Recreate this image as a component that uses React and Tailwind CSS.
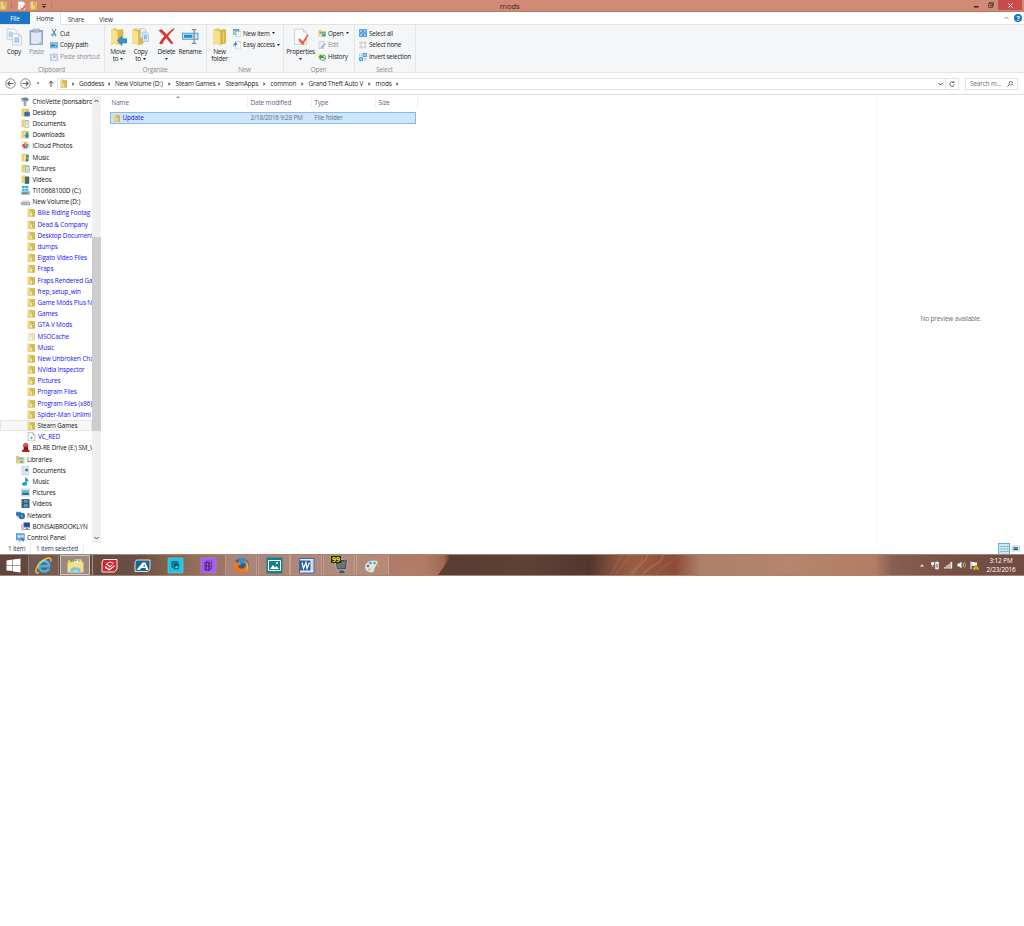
import React from 'react';
import clsx from 'clsx';

const breadcrumbs = [
  { name: 'Goddess', width: 'w-[36px]' },
  { name: 'New Volume (D:)', width: 'w-[60.5px]' },
  { name: 'Steam Games', width: 'w-[50px]' },
  { name: 'SteamApps', width: 'w-[45px]' },
  { name: 'common', width: 'w-[38px]' },
  { name: 'Grand Theft Auto V', width: 'w-[67px]' },
  { name: 'mods', width: 'w-[28px]' },
];

const places = [
  { name: 'ChioVette (bonsaibro', icon: 'phone' },
  { name: 'Desktop', icon: 'desktop' },
  { name: 'Documents', icon: 'folderDoc' },
  { name: 'Downloads', icon: 'folderDown' },
  { name: 'iCloud Photos', icon: 'icloud' },
  { name: 'Music', icon: 'folderMusic' },
  { name: 'Pictures', icon: 'folderPic' },
  { name: 'Videos', icon: 'folderVideo' },
  { name: 'TI10668100D (C:)', icon: 'system' },
  { name: 'New Volume (D:)', icon: 'drive' },
];

const folders = [
  'Bike Riding Footag',
  'Dead & Company',
  'Desktop Document',
  'dumps',
  'Elgato Video Files',
  'Fraps',
  'Fraps Rendered Gar',
  'frep_setup_win',
  'Game Mods Plus N',
  'Games',
  'GTA V Mods',
  'MSOCache',
  'Music',
  'New Unbroken Cha',
  'NVidia Inspector',
  'Pictures',
  'Program Files',
  'Program Files (x86)',
  'Spider-Man Unlimi',
];

const libraries = [
  { name: 'Documents', icon: 'doc' },
  { name: 'Music', icon: 'note' },
  { name: 'Pictures', icon: 'picture' },
  { name: 'Videos', icon: 'film' },
];

const Folder = ({ className = 'w-[8px] h-[9px]' }) => (
  <svg className={clsx('shrink-0', className)} viewBox="0 0 16 18" preserveAspectRatio="none">
    <path d="M1 1h7v16H1z" fill="#ecd683" />
    <path d="M8 2h8v15H8z" fill="#dfc15c" />
    <path d="M8 9l3-1v9H8z" fill="#f7e9a6" />
    <path d="M8 2v7M11.500 5v11" fill="none" stroke="#b3922f" />
    <path d="M15.500 3v14M1 16.500h14" stroke="#c9a846" />
  </svg>
);

const badges = {
  desktop: <path d="M7 8h9v7H7z" fill="#2476c5" stroke="#174c8b" />,
  folderDoc: <path d="M8 4h7v12H8zM10 8h4M10 11h4" fill="#eef5fa" stroke="#90a9bc" />,
  folderDown: <path d="M9 5h4v5h3l-5 6-5-6h3z" fill="#2586cf" />,
  folderMusic: <path d="M11 4v9M11 4l4 3M9 14a2 1.5 0 1 0 1-2" fill="#1e80c2" stroke="#1e80c2" strokeWidth="2" />,
  folderPic: <path d="M8 5h8v10H8zM9 12l3-3 3 3" fill="#d2edf6" stroke="#6999ad" />,
  folderVideo: <path d="M8 4h7v12H8zM8 8h7M8 12h7" fill="#47758b" stroke="#31444e" />,
};

const TreeIcon = ({ name }) => {
  if (badges[name]) {
    return (
      <svg className="w-[9px] h-[9px] shrink-0" viewBox="0 0 17 17">
        <path d="M1 2l6-2v15l-6 1z" fill="#ecd06c" />
        <path d="M6 2h9v14H6z" fill="#dfc15a" />
        <path d="M6 3l3 2v10l-3 2z" fill="#f7e9a6" />
        {badges[name]}
      </svg>
    );
  }
  const art = {
    phone: (
      <>
        <path d="M1 2l10-1 4 4-5 3H2z" fill="#73777b" />
        <path d="M5 6h5v11H5z" fill="#a0a6ab" />
        <circle cx="11" cy="5" r="3" fill="#4b9ac9" />
        <path d="M1 4h4v4H1z" fill="#9ab1be" />
      </>
    ),
    icloud: (
      <>
        <rect x="1" y="1" width="15" height="15" rx="3" fill="#f2f2f2" stroke="#d5d5d5" />
        <circle cx="8.500" cy="5.500" r="3" fill="#f39320" />
        <circle cx="12" cy="8" r="2.500" fill="#5bb947" />
        <circle cx="10.500" cy="11.500" r="2.500" fill="#3a9cdd" />
        <circle cx="6.500" cy="11.500" r="2.500" fill="#9a45b0" />
        <circle cx="5" cy="8" r="2.500" fill="#e63b31" />
      </>
    ),
    system: (
      <>
        <path d="M2 0h5v4H2zM8 0h6v4H8zM2 5h5v4H2zM8 5h6v4H8z" fill="#25b0df" />
        <path d="M1 10h15v6H1z" fill="#628394" />
        <path d="M2 10h13v2H2z" fill="#c0d2d9" />
        <path d="M12 13h2v2h-2z" fill="#6bf06b" />
      </>
    ),
    drive: (
      <>
        <path d="M3 6h12l2 5H1z" fill="#e2e5e7" />
        <path d="M1 10h16v5H1z" fill="#b2b7ba" stroke="#858b8e" />
        <path d="M12 12h3v1h-3z" fill="#fff" />
      </>
    ),
    file: (
      <>
        <path d="M2 1h9l4 4v12H2z" fill="#f6f8f8" stroke="#93999c" />
        <path d="M11 1v4h4" fill="none" stroke="#93999c" />
        <path d="M6 11l2-3 3 3-2 3z" fill="#72b77b" />
      </>
    ),
    disc: (
      <>
        <circle cx="9" cy="5" r="5" fill="#d0332b" />
        <path d="M5 2h8v3H5z" fill="#e96355" />
        <path d="M6 8h7l1 5H4z" fill="#7e1d1a" />
        <path d="M2 13h14v4H2z" fill="#b5241e" />
      </>
    ),
    libraries: (
      <>
        <path d="M0 2h6l1 2h9v12H0z" fill="#e8ca68" />
        <path d="M3 5h11v8H3z" fill="#79c2df" />
        <path d="M2 9h14v7H4z" fill="#f4df8f" />
        <path d="M7 11h7v4H7z" fill="#68add2" />
      </>
    ),
    doc: (
      <>
        <path d="M2 1h12v15H2z" fill="#f0f5f8" stroke="#99a8b3" />
        <path d="M4 4h3M4 7h3M4 10h3M4 13h7" stroke="#b1bdc5" />
        <path d="M8 5h5v5H8z" fill="#3574a8" />
      </>
    ),
    note: (
      <>
        <path d="M9 0c1 4 7 4 5 10-1-3-3-3-3-3v7H8V0z" fill="#2390d6" />
        <ellipse cx="6.500" cy="13" rx="4.500" ry="3.500" fill="#2797de" />
      </>
    ),
    picture: (
      <>
        <path d="M0 2h17v13H0z" fill="#eef3f3" stroke="#a6b2b7" />
        <path d="M2 4h13v9H2z" fill="#61b3da" />
        <path d="M2 9l5 1 4-1 4 1v3H2z" fill="#28737c" />
      </>
    ),
    film: (
      <>
        <path d="M1 0h15v17H1z" fill="#344650" />
        <path d="M5 1h8v6H5zM5 9h8v7H5z" fill="#4d9cbd" />
        <path d="M3 1v15M15 1v15" stroke="#d6dee1" strokeDasharray="1.500 2" />
      </>
    ),
    network: (
      <>
        <path d="M0 2h9v7H0z" fill="#2671bc" stroke="#879ba9" />
        <circle cx="11" cy="9.500" r="6" fill="#1f67ba" />
        <path d="M9 5c4 0 3 3 5 4-1 2-1 4-2 5-2-3-4-4-3-9" fill="#41b25a" />
        <path d="M2 10h5v2H2z" fill="#8499a8" />
      </>
    ),
    computer: (
      <>
        <path d="M5 1h12v9H5z" fill="#2446ad" stroke="#96a4b3" />
        <path d="M1 5h4v10H1z" fill="#d0d5dc" stroke="#9aa0ab" />
        <path d="M9 11h5v2h3v2H6v-2h3z" fill="#84919e" />
      </>
    ),
    control: (
      <>
        <path d="M0 1h16v12H0z" fill="#5aa8da" stroke="#6d91a9" />
        <path d="M3 4h5v5H3z" fill="#d7edf8" />
        <circle cx="12" cy="6" r="3" fill="#b9def2" />
        <path d="M9 11l3-2 4 5-3 2z" fill="#3679ac" />
        <path d="M4 14h6v2H4z" fill="#8ca9bb" />
      </>
    ),
  };
  return (
    <svg className="w-[9px] h-[9px] shrink-0" viewBox="0 0 17 17">
      {art[name]}
    </svg>
  );
};

const TreeRow = ({ name, icon, indent = 'pl-[21px]', blue, selected, faded }) => (
  <div
    className={clsx(
      'flex items-center h-[11.19px] gap-[2.500px] whitespace-nowrap',
      indent,
      blue ? 'text-[#1410fa]' : 'text-[#111]',
      selected && 'bg-[#f7f7f7] outline outline-[0.5px] -outline-offset-1 outline-[#e6e6e6]'
    )}
  >
    {icon ? <TreeIcon name={icon} /> : <Folder className={clsx('w-[8px] h-[9px]', faded && 'opacity-45')} />}
    <span>{name}</span>
  </div>
);

const Caret = ({ className }) => (
  <svg className={clsx('w-[3px] h-[2px] shrink-0', className)} viewBox="0 0 6 4">
    <path d="M0 0h6L3 4z" fill="#222" />
  </svg>
);

const ribbonArt = {
  copy: (
    <>
      <path d="M2 2h14l4 4v16H2z" fill="#f7fafc" stroke="#9dacb8" />
      <path d="M5 7h8v11H5z" fill="#b9d4ec" />
      <path d="M13 11h12l5 5v17H13z" fill="#f9fbfc" stroke="#9dacb8" />
      <path d="M25 11v5h5" fill="none" stroke="#9dacb8" />
      <path d="M16 18h10v11H16z" fill="#a8cdf0" />
    </>
  ),
  paste: (
    <>
      <path d="M3 4h26v29H3z" fill="#8ba3c7" />
      <path d="M6 8h20v23H6z" fill="#dfe8f4" />
      <path d="M10 2h12v6H10z" fill="#b7c2d1" stroke="#8594a9" />
      <path d="M19 31l7-7v7z" fill="#bac9df" />
    </>
  ),
  folder: (
    <>
      <path d="M4 3l12-3v30L4 32z" fill="#e5c659" />
      <path d="M14 4l15-2v28l-15 3z" fill="#d8b547" />
      <path d="M4 3l15 5v26L4 30z" fill="#f6e28b" />
      <path d="M19 8v26" stroke="#bc982e" />
      <path d="M24 8v21" stroke="#efd879" strokeWidth="2" />
    </>
  ),
  move: (
    <>
      <path d="M2 2l11-2v30L2 32z" fill="#e5c659" />
      <path d="M12 4l14-2v28l-14 3z" fill="#dcb94c" />
      <path d="M2 2l13 5v26L2 29z" fill="#f6e28b" />
      <path d="M14 24l9-8v5h10v8H23v5z" fill="#2d98d3" stroke="#1a74a8" />
    </>
  ),
  copyTo: (
    <>
      <path d="M0 3l10-3v30L0 31z" fill="#e5c659" />
      <path d="M10 3l12-1v29l-12 3z" fill="#dcb94c" />
      <path d="M0 3l12 5v25L0 29z" fill="#f6e28b" />
      <path d="M16 1h8l3 3v16H16z" fill="#edf4fa" stroke="#8fa4b4" />
      <path d="M20 8h8l4 4v14H20z" fill="#d8eafa" stroke="#8fa4b4" />
      <path d="M23 13h6v9h-6z" fill="#93bfe6" />
    </>
  ),
  remove: (
    <path
      d="M2 5l5-2 10 10C21 8 25 5 31 1l-1 3c-5 4-8 8-11 12l10 13-3 2-10-12c-4 4-6 7-8 12l-5-1c3-6 6-10 10-14z"
      fill="#df3229"
      stroke="#b9271f"
    />
  ),
  rename: (
    <>
      <path d="M1 10h30v12H1z" fill="#cce7f6" stroke="#5a9dc6" strokeWidth="2" />
      <path d="M4 13h16v6H4z" fill="#218bd0" />
      <path d="M19 3h9M23.500 3v27M19 30h9" fill="none" stroke="#7791a2" strokeWidth="2.500" />
    </>
  ),
  properties: (
    <>
      <path d="M5 2h17l6 6v24H5z" fill="#fafbfb" stroke="#a9afb2" />
      <path d="M22 2v6h6" fill="#e5e9eb" stroke="#a9afb2" />
      <path d="M12 23l3-3 6 6L30 12l2 2-10 19-4-2z" fill="#ed653c" />
    </>
  ),
};

const BigButton = ({ art, lines, width, caret, disabled }) => (
  <div className={clsx('flex flex-col items-center shrink-0', width, disabled ? 'text-[#8f8f8f]' : 'text-[#1c1c1c]')}>
    <svg className="w-[17px] h-[18px] shrink-0" viewBox="0 0 33 35">
      {ribbonArt[art]}
    </svg>
    <div className="mt-[2px] leading-[7px] text-center whitespace-nowrap">{lines[0]}</div>
    <div className="flex items-center gap-[2px] h-[7px] leading-[7px]">
      {lines[1]}
      {caret && <Caret />}
    </div>
  </div>
);

const smallArt = {
  cut: (
    <>
      <path d="M4 0l6 11M12 0L6 11" stroke="#477b9f" strokeWidth="2" />
      <path d="M5 10a2 2 0 1 0 1 4zM10 10a2 2 0 1 1 0 4z" fill="none" stroke="#239be1" strokeWidth="2" />
    </>
  ),
  path: (
    <>
      <path d="M0 3h16v11H0z" fill="#8cc6ee" stroke="#3d94cd" />
      <path d="M2 7l2 4 2-4 2 4 2-4M12 10h2" fill="none" stroke="#125f99" strokeWidth="1.500" />
    </>
  ),
  shortcut: (
    <>
      <path d="M1 2h14v13H1z" fill="#d2deec" stroke="#8fa4be" />
      <path d="M4 5h8v8H4z" fill="#f1f5fa" />
      <path d="M5 11l5-5M6 6h4v4" fill="none" stroke="#7899c0" strokeWidth="1.500" />
    </>
  ),
  newItem: (
    <>
      <path d="M1 1h11v10H1z" fill="#9bd1e9" stroke="#4c89aa" />
      <path d="M1 1h11v2H1z" fill="#477f9f" />
      <path d="M6 5h10v11H6z" fill="#f3f7f9" stroke="#92a8b5" />
    </>
  ),
  easy: (
    <>
      <path d="M5 1h11v15H5z" fill="#f9fafb" stroke="#a3acb4" />
      <path d="M2 13c-2-5-1-8 2-9V1l5 5-5 4V7c-2 1-2 3-2 6z" fill="#3082cc" />
    </>
  ),
  open: (
    <>
      <path d="M1 2h5l2 2h8v11H1z" fill="#e6ca61" />
      <path d="M3 6h12v6H3z" fill="#5bb09b" />
      <path d="M1 9h12v6H1z" fill="#f6e28b" />
      <path d="M8 10h7v5H8z" fill="#48a3d2" />
    </>
  ),
  edit: (
    <>
      <path d="M2 1h10v14H2z" fill="#e8f0f8" stroke="#a7b9ca" />
      <path d="M6 12l8-8 2 2-8 8-3 1z" fill="#92b3d5" />
    </>
  ),
  history: (
    <>
      <path d="M1 1h8v12H1z" fill="#efd97e" />
      <circle cx="10" cy="9.500" r="5.500" fill="#e5f2df" stroke="#33913b" strokeWidth="1.500" />
      <path d="M1 8l5-5v3h4v4H6v3z" fill="#37a43e" />
      <path d="M10 6v4h4" fill="none" stroke="#27639b" strokeWidth="1.500" />
    </>
  ),
  all: <path d="M1 1h6v6H1zM9 1h6v6H9zM1 9h6v6H1zM9 9h6v6H9z" fill="#8fcafa" stroke="#2b8ae6" strokeWidth="1.500" />,
  none: <path d="M2 2h4v4H2zM10 2h4v4h-4zM2 10h4v4H2zM10 10h4v4h-4z" fill="#fff" stroke="#aaaeb2" strokeWidth="1.200" />,
  invert: (
    <>
      <path d="M1 2h4v4H1zM10 10h4v4h-4z" fill="#fff" stroke="#8aabc6" />
      <path d="M8 1h7v6H8zM1 9h6v6H1z" fill="#8fcafa" stroke="#2b8ae6" strokeWidth="1.500" />
    </>
  ),
};

const SmallButton = ({ art, label, caret, disabled }) => (
  <div className={clsx('flex items-center h-[11.700px] whitespace-nowrap', disabled ? 'text-[#929292]' : 'text-[#1c1c1c]')}>
    <svg className="w-[8px] h-[8px] mr-[2px] shrink-0" viewBox="0 0 16 16" fill="none">
      {smallArt[art]}
    </svg>
    {label}
    {caret && <Caret className="ml-[2px]" />}
  </div>
);

const RibbonGroup = ({ title, width, children }) => (
  <div className={clsx('flex flex-col h-full shrink-0 border-r border-[#e4e5e6]', width)}>
    <div className="flex h-[39px] shrink-0">{children}</div>
    <div className="h-[8px] pr-px text-center text-[#8c8c8c] leading-[11px]">{title}</div>
  </div>
);

const Ribbon = () => (
  <div className="flex h-[49px] bg-[#f5f6f7] border-t border-b border-[#e2e3e4] tracking-[-0.220px]">
    <RibbonGroup title="Clipboard" width="w-[105px]">
      <div className="flex pt-[3px] pl-[3px]">
        <BigButton art="copy" lines={['Copy']} width="w-[22px]" />
        <BigButton art="paste" lines={['Paste']} width="w-[23px]" disabled />
      </div>
      <div className="pt-[2.300px] pl-[2px]">
        <SmallButton art="cut" label="Cut" />
        <SmallButton art="path" label="Copy path" />
        <SmallButton art="shortcut" label="Paste shortcut" disabled />
      </div>
    </RibbonGroup>
    <RibbonGroup title="Organize" width="w-[102px]">
      <div className="flex pt-[3px] pl-[2px]">
        <BigButton art="move" lines={['Move', 'to']} width="w-[22px]" caret />
        <BigButton art="copyTo" lines={['Copy', 'to']} width="w-[23px]" caret />
        <BigButton art="remove" lines={['Delete']} width="w-[29px]" caret />
        <BigButton art="rename" lines={['Rename']} width="w-[18px]" />
      </div>
    </RibbonGroup>
    <RibbonGroup title="New" width="w-[77px]">
      <div className="flex pt-[3px] pl-[1px]">
        <BigButton art="folder" lines={['New', 'folder']} width="w-[23px]" />
      </div>
      <div className="pt-[2.300px] pl-[2px]">
        <SmallButton art="newItem" label="New item" caret />
        <SmallButton art="easy" label="Easy access" caret />
      </div>
    </RibbonGroup>
    <RibbonGroup title="Open" width="w-[71px]">
      <div className="flex pt-[3px] pl-[2px]">
        <BigButton art="properties" lines={['Properties']} width="w-[29px]" caret />
      </div>
      <div className="pt-[2.300px] pl-[3px]">
        <SmallButton art="open" label="Open" caret />
        <SmallButton art="edit" label="Edit" disabled />
        <SmallButton art="history" label="History" />
      </div>
    </RibbonGroup>
    <RibbonGroup title="Select" width="w-[61px]">
      <div className="pt-[2.300px] pl-[4px]">
        <SmallButton art="all" label="Select all" />
        <SmallButton art="none" label="Select none" />
        <SmallButton art="invert" label="Invert selection" />
      </div>
    </RibbonGroup>
  </div>
);

const TitleBar = () => (
  <div className="relative flex items-center h-[12px] bg-[#d08b76] border-b border-[#bd7965]">
    <Folder className="w-[7px] h-[9px]" />
    <div className="w-px h-[7px] ml-[4px] bg-[#b77562]" />
    <svg className="w-[9px] h-[9px] ml-[5px]" viewBox="0 0 18 18">
      <path d="M2 1h10l4 4v12H2z" fill="#fafafa" stroke="#c7b5af" />
      <path d="M7 12l3 3 6-8v6l-5 5-4-3z" fill="#e8633e" />
    </svg>
    <Folder className="w-[7px] h-[9px] ml-[4px]" />
    <svg className="w-[4px] h-[4px] ml-[4.500px] mt-px" viewBox="0 0 8 8">
      <path d="M0 0h8v1.500H0zM0 4h8L4 8z" fill="#222" />
    </svg>
    <div className="w-px h-[7px] ml-[5px] bg-[#bd7c69]" />
    <div className="flex-1 text-center text-[7.800px] leading-[12px] text-[#382722] pr-[6px]">mods</div>
    <svg className="w-[5px] h-[5px] mt-[2px]" viewBox="0 0 10 10">
      <path d="M0 4h9v3H0z" fill="#302521" />
    </svg>
    <svg className="w-[6px] h-[6px] ml-[9px] mb-px" viewBox="0 0 12 12" fill="none" stroke="#302521" strokeWidth="1.200">
      <path d="M1 3h8v8H1zM3 3V1h8v7H9M4 6h3v2H4z" />
    </svg>
    <div className="flex items-center justify-center w-[24px] h-[10px] ml-[4px] mr-[2px] mb-[1px] bg-[#c84c4e]">
      <svg className="w-[5px] h-[5px]" viewBox="0 0 10 10">
        <path d="M1 1l8 8M9 1L1 9" stroke="#fff" strokeWidth="2" />
      </svg>
    </div>
  </div>
);

const TabBar = () => (
  <div className="flex items-center h-[12px] text-[#333]">
    <div className="w-[30px] h-[12px] bg-[#1a75c8] text-white text-center leading-[14px]">File</div>
    <div className="relative z-10 w-[31px] h-[13px] mt-[1px] bg-[#f8f9fa] border-r border-[#e2e3e4] text-center leading-[14px]">Home</div>
    <div className="w-[30px] h-[12px] text-center leading-[15px]">Share</div>
    <div className="w-[30px] h-[12px] text-center leading-[15px]">View</div>
    <svg className="w-[5px] h-[4px] ml-auto" viewBox="0 0 10 8">
      <path d="M1 6l4-4 4 4" fill="none" stroke="#777" strokeWidth="1.500" />
    </svg>
    <div className="flex items-center justify-center w-[8px] h-[8px] ml-[5px] mr-[2px] rounded-full bg-[#1677cc] text-white text-[7px] font-bold leading-none">
      ?
    </div>
  </div>
);

const NavArrow = ({ flip }) => (
  <svg className={clsx('w-[11px] h-[11px] shrink-0', flip && '-scale-x-100')} viewBox="0 0 22 22" fill="none" stroke="#666">
    <circle cx="11" cy="11" r="9.500" strokeWidth="1.500" />
    <path d="M17 11H6M10 6.500L5.500 11l4.500 4.500" strokeWidth="2.200" />
  </svg>
);

const Crumb = () => (
  <svg className="w-[2.500px] h-[4px] shrink-0 mr-[0.5px]" viewBox="0 0 6 8">
    <path d="M1 0l5 4-5 4z" fill="#444" />
  </svg>
);

const AddressBar = () => (
  <div className="flex items-center h-[22px] border-b-[1.500px] border-[#dcdcdc] text-[#1c1c1c]">
    <div className="flex items-center pl-[5px] w-[57px]">
      <NavArrow />
      <div className="w-[4px]" />
      <NavArrow flip />
      <svg className="w-[4px] h-[3px] ml-[5px]" viewBox="0 0 8 6">
        <path d="M1 1h6L4 5z" fill="#666" />
      </svg>
      <svg className="w-[6px] h-[8px] ml-[7.500px]" viewBox="0 0 12 16">
        <path d="M6 14V3M2 7l4-5 4 5" fill="none" stroke="#555" strokeWidth="2" />
      </svg>
    </div>
    <div className="flex items-center flex-1 h-[12px] border border-[#e1e1e1]">
      <Folder className="w-[7px] h-[9px] ml-[2px] mr-[4.500px]" />
      <Crumb />
      {breadcrumbs.map((crumb) => (
        <div key={crumb.name} className={clsx('flex items-center shrink-0', crumb.width)}>
          <span className="flex-1 pl-[4.500px] whitespace-nowrap">{crumb.name}</span>
          <Crumb />
        </div>
      ))}
      <svg className="w-[5px] h-[4px] ml-auto mr-[2.500px]" viewBox="0 0 10 8">
        <path d="M1 2l4 4 4-4" fill="none" stroke="#444" strokeWidth="2" />
      </svg>
      <div className="flex items-center justify-center w-[13px] h-full border-l border-[#e1e1e1]">
        <svg className="w-[6px] h-[6px]" viewBox="0 0 12 12">
          <path d="M9 3a4.500 4.500 0 1 0 1.500 4M6 3h4V0" fill="none" stroke="#555" strokeWidth="1.700" />
        </svg>
      </div>
    </div>
    <div className="flex items-center w-[53px] h-[12px] ml-[6px] mr-[6px] pl-[4px] pr-[4px] border border-[#e1e1e1] text-[#6d6d6d]">
      <span className="flex-1">Search m...</span>
      <svg className="w-[6px] h-[6px]" viewBox="0 0 12 12">
        <path d="M1 11l4-4" stroke="#555" strokeWidth="2" />
        <circle cx="7.500" cy="4.500" r="3.500" fill="none" stroke="#555" strokeWidth="1.500" />
      </svg>
    </div>
  </div>
);

const Sidebar = () => (
  <div className="flex w-[101px] h-[448px] shrink-0">
    <div className="w-[92px] overflow-hidden tracking-[-0.120px]">
      {places.map((p) => (
        <TreeRow key={p.name} name={p.name} icon={p.icon} />
      ))}
      {folders.map((name) => (
        <TreeRow key={name} name={name} indent="pl-[27px]" blue faded={name === 'MSOCache'} />
      ))}
      <TreeRow name="Steam Games" indent="pl-[27px]" selected />
      <TreeRow name="VC_RED" icon="file" indent="pl-[26.500px]" blue />
      <TreeRow name="BD-RE Drive (E:) SM_V" icon="disc" />
      <TreeRow name="Libraries" icon="libraries" indent="pl-[15.500px]" />
      {libraries.map((l) => (
        <TreeRow key={l.name} name={l.name} icon={l.icon} />
      ))}
      <TreeRow name="Network" icon="network" indent="pl-[15.500px]" />
      <TreeRow name="BONSAIBROOKLYN" icon="computer" />
      <TreeRow name="Control Panel" icon="control" indent="pl-[15.500px]" />
    </div>
    <div className="flex flex-col items-center w-[8.500px] h-[447px] bg-[#f0f0f0]">
      <svg className="w-[5px] h-[10px]" viewBox="0 0 10 20">
        <path d="M1 12l4-4 4 4" fill="none" stroke="#444" strokeWidth="2" />
      </svg>
      <div className="w-full h-[194px] mt-[131.500px] bg-[#cdcdcd]" />
      <svg className="w-[5px] h-[10px] mt-auto" viewBox="0 0 10 20">
        <path d="M1 8l4 4 4-4" fill="none" stroke="#444" strokeWidth="2" />
      </svg>
    </div>
  </div>
);

const FileList = () => (
  <div className="flex-1 pl-[9px]">
    <div className="relative flex h-[13px] text-[#55657f] leading-[13px]">
      <div className="w-[138px] pl-[1.500px] border-r border-[#efefef]">Name</div>
      <div className="w-[64px] pl-[2.500px] border-r border-[#efefef]">Date modified</div>
      <div className="w-[64px] pl-[2.500px] border-r border-[#efefef]">Type</div>
      <div className="w-[42px] pl-[2.500px] border-r border-[#efefef]">Size</div>
      <svg className="absolute left-[66px] top-0 w-[4px] h-[2px]" viewBox="0 0 8 4">
        <path d="M0 4l4-4 4 4z" fill="#7892aa" />
      </svg>
    </div>
    <div className="flex items-center w-[306px] h-[12px] mt-[3px] bg-[#cde6fe] border border-[#84b9e9] text-[#6a6e73]">
      <Folder className="w-[7px] h-[8px] ml-[2px]" />
      <div className="w-[130.500px] pl-[2.500px] text-[#1410fa]">Update</div>
      <div className="w-[64px] tracking-[-0.220px]">2/18/2016 9:28 PM</div>
      <div>File folder</div>
    </div>
  </div>
);

const StatusBar = () => (
  <div className="flex items-center h-[11px] pl-[8px] text-[#27416b] leading-[11px]">
    <div className="w-[23px] border-r border-[#eee] tracking-[-0.200px]">1 item</div>
    <div className="w-[53px] pl-[5px] border-r border-[#eee] tracking-[-0.200px]">1 item selected</div>
    <div className="flex items-center justify-center w-[12px] h-[12px] ml-auto bg-[#c6eafa] border border-[#56b6dc]">
      <svg className="w-[9px] h-[8px]" viewBox="0 0 18 16">
        <path d="M1 3h4M1 8h4M1 13h4M7 3h4M7 8h4M7 13h4M13 3h4M13 8h4M13 13h4" stroke="#718791" strokeWidth="1.500" />
      </svg>
    </div>
    <svg className="w-[8px] h-[7px] ml-[2px] mr-[4px]" viewBox="0 0 16 14">
      <path d="M1 2h14v10H1z" fill="#e9f1f4" stroke="#9aabb4" />
      <path d="M3 4h9v5H3z" fill="#3498ba" />
      <path d="M3 8h9v2H3z" fill="#264f55" />
    </svg>
  </div>
);

const taskArt = {
  ie: (
    <>
      <path d="M28 23c-2 4-5 6-10 6-6 0-10-5-10-11S12 8 18 8s10 4 10 10H10" fill="none" stroke="#3fb4f0" strokeWidth="5.500" />
      <path d="M8 31c-5 3-8-1-5-8C7 13 17 4 26 2c5-1 7 2 5 7" fill="none" stroke="#f3c93f" strokeWidth="2.800" />
      <path d="M10 12c4-5 11-6 15-2" fill="none" stroke="#a8e0fb" strokeWidth="1.500" />
    </>
  ),
  explorer: (
    <>
      <path d="M2 6h8l3 3h18v20H2z" fill="#e6c55d" />
      <path d="M6 4h5v5H6z" fill="#53a948" />
      <path d="M15 5h14v7H15z" fill="#f9f3d2" />
      <path d="M1 11h32v20H1z" fill="#f4df8a" />
      <path d="M7 33v-8c0-6 20-6 20 0v8h-6v-6h-8v6z" fill="#7cc3e8" />
      <path d="M15 6h5v2h-5z" fill="#49a1d7" />
      <path d="M22 7h5v2h-5z" fill="#d8584b" />
    </>
  ),
  check: (
    <>
      <path d="M5 5h27v19l-5 6H2V10z" fill="#cf2433" stroke="#fff" strokeWidth="1.800" />
      <path d="M9 14l9-5 8 3 2-3-10 12z" fill="#fff" />
      <path d="M8 18l9 6 10-8v3l-10 8-9-5z" fill="#fff" />
      <path d="M12 14l6-3 6 2-6 5z" fill="#cf2433" />
    </>
  ),
  autodesk: (
    <>
      <path d="M5 6h27v18l-4 5H2V11z" fill="#1c6495" stroke="#e9f1f5" strokeWidth="1.800" />
      <path d="M5 26L17 11h6l6 15h-5l-1-4h-8l-4 4z" fill="#fff" />
      <path d="M18 19l3-4 1 4z" fill="#1c6495" />
    </>
  ),
  sheets: (
    <>
      <path d="M2 2h30v30H2z" fill="#1cc4e4" stroke="#6be2f5" />
      <path d="M9 8h12l3 3v11H9z" fill="#0b6f8b" />
      <path d="M13 12h11v13H13z" fill="#0a5a74" stroke="#1fb4d2" />
      <path d="M15 22l4-5 4 5z" fill="#3bd4ed" />
    </>
  ),
  reel: (
    <>
      <path d="M2 2h30v30H2z" fill="#a15cf0" stroke="#bd87f5" />
      <path d="M13 8h10v15H13z" fill="#b27bf0" stroke="#552a8a" strokeWidth="1.500" />
      <path d="M10 11h10v15H10z" fill="#a15cf0" stroke="#4a207b" strokeWidth="2" />
      <path d="M13 11v15M17 11v15M10 18h10" stroke="#4a207b" strokeWidth="1.500" />
    </>
  ),
  firefox: (
    <>
      <circle cx="17" cy="17" r="15" fill="#245e9e" />
      <path d="M10 5c5-5 15-3 18 2l-5 7-11-2z" fill="#398fce" />
      <path d="M3 7l5 4c5-2 7 1 8 4l-6 3c2 8 13 7 15-1 1-5-1-8-4-10 12 1 14 16 5 22-9 7-22 3-24-8-1-6 0-9 1-14z" fill="#e97820" />
      <path d="M25 8c8 7 6 20-3 23 9-7 6-15 3-23z" fill="#f9c434" />
    </>
  ),
  photos: (
    <>
      <path d="M1 1h32v32H1z" fill="#13818a" />
      <path d="M5 7h24v20H5z" fill="none" stroke="#fff" strokeWidth="2" />
      <path d="M8 24l6-8 4 5 3-3 5 6z" fill="#fff" />
      <circle cx="22" cy="12" r="2" fill="#fff" />
    </>
  ),
  word: (
    <>
      <path d="M3 3h29v29H3z" fill="#e4edf7" stroke="#3b67a9" strokeWidth="2" />
      <path d="M4 7h21v20H4z" fill="#2c5ca6" />
      <path d="M8 11l3 12 5-12 2 12 5-12" fill="none" stroke="#fff" strokeWidth="2.500" />
      <path d="M27 8h3M27 12h3M27 16h3M27 20h3M27 24h3" stroke="#7798c4" />
    </>
  ),
  fraps: (
    <>
      <path d="M8 6l25-2-2 21-20 1z" fill="#43484a" stroke="#c3c7c8" strokeWidth="1.500" />
      <path d="M11 15l19-9-2 16-16 1z" fill="#6d7375" />
      <path d="M17 26h7l2 3 4 2-4 2H12l5-3z" fill="#4a4f51" stroke="#aeb3b4" />
    </>
  ),
  paint: (
    <>
      <path d="M2 22C0 12 12 5 24 7c9 3 6 11 1 13-5 1-4 3-3 6 1 8-18 7-20-4z" fill="#d5e9f2" stroke="#829eaa" />
      <circle cx="8" cy="18" r="2.500" fill="#e53d36" />
      <circle cx="13" cy="12" r="2.500" fill="#37a2dc" />
      <circle cx="21" cy="12" r="2.500" fill="#57b04b" />
      <circle cx="11" cy="25" r="2.500" fill="#eaba2e" />
      <path d="M19 29l8-18 4-10 3 2-5 11-8 16z" fill="#cb853f" />
    </>
  ),
};

const TaskButton = ({ art, width, running, active, children }) => (
  <div
    className={clsx(
      'relative flex items-center justify-center h-[20px] shrink-0',
      width,
      running && 'bg-white/10 border-x border-white/20',
      active && 'bg-white/35 border border-white/50'
    )}
  >
    <svg className="w-[17px] h-[17px]" viewBox="0 0 34 34">
      {taskArt[art]}
    </svg>
    {children}
  </div>
);

const Taskbar = () => (
  <div className="relative flex items-center h-[22px] overflow-hidden border-y border-[#a78373] bg-[linear-gradient(90deg,#5f463c_0px,#664c40_100px,#6b5043_140px,#82604e_165px,#94705c_200px,#a0766a_230px,#a97d6c_340px,#b37b67_425px,#a06855_444px,#573d32_450px,#5e4236_530px,#53372e_590px,#885340_615px,#995d43_635px,#8d4c39_675px,#ad8067_700px,#b5856d_790px,#b27d62_875px,#875f53_892px,#785044_950px,#704b40_1024px)]">
    <svg className="absolute inset-0 w-full h-full" viewBox="0 0 1024 22" preserveAspectRatio="none">
      <path d="M452 0l-14 22h20V0z" fill="#573d32" />
      <g fill="none" stroke="#c88a5b" opacity=".35">
        <path d="M622 0l-12 22M630 0l-15 22M643 0c-2 12-12 15-14 22" />
        <path d="M648 0c-3 10-14 14-16 22M663 0c0 10-16 12-20 22" strokeWidth="2" />
        <path d="M678 0c-5 9-18 12-22 22" />
      </g>
    </svg>
    <div className="relative flex items-center">
      <svg className="w-[15px] h-[15px] ml-[6px] mr-[7px]" viewBox="0 0 30 30">
        <path d="M1 5l12-2v11H1zM14 3l15-2v13H14zM1 15h12v11L1 25zM14 15h15v14l-15-2z" fill="#fff" />
      </svg>
      <TaskButton art="ie" width="w-[31px]" running />
      <div className="w-px" />
      <TaskButton art="explorer" width="w-[30px]" active />
      <div className="w-[3px] h-[20px] border-r border-white/40" />
      <TaskButton art="check" width="w-[33px]" />
      <TaskButton art="autodesk" width="w-[33px]" />
      <TaskButton art="sheets" width="w-[33px]" />
      <TaskButton art="reel" width="w-[33px]" />
      <TaskButton art="firefox" width="w-[32px]" running />
      <div className="w-px" />
      <TaskButton art="photos" width="w-[32px]" running />
      <TaskButton art="word" width="w-[32px]" running />
      <div className="w-px" />
      <TaskButton art="fraps" width="w-[32px]" running>
        <span className="absolute left-[7px] top-[1px] px-px bg-[#26290a] text-[#f4f130] text-[7px] leading-[7px] font-bold">99</span>
      </TaskButton>
      <div className="w-px" />
      <TaskButton art="paint" width="w-[33px]" running />
    </div>
    <div className="relative flex items-center ml-auto text-white">
      <svg className="w-[4px] h-[3px] mr-[7px]" viewBox="0 0 8 6">
        <path d="M0 5h8L4 1z" fill="#fff" />
      </svg>
      <svg className="w-[9px] h-[9px] mr-[4px]" viewBox="0 0 18 18">
        <path d="M1 3h5v4H1zM3.500 7v5" fill="#fff" stroke="#fff" strokeWidth="1.500" />
        <path d="M9 2h6v14H9z" fill="#e7e2df" stroke="#fff" />
        <path d="M11 6h2v7h-2z" fill="#755d54" />
      </svg>
      <svg className="w-[9px] h-[8px] mr-[4px]" viewBox="0 0 18 16">
        <path d="M1 12h2v3H1zM5 9h2v6H5zM9 6h2v9H9zM13 2h3v13h-3z" fill="#fff" stroke="#d5c7c0" />
      </svg>
      <svg className="w-[9px] h-[8px] mr-[4px]" viewBox="0 0 18 16">
        <path d="M1 5h4l4-4v14l-4-4H1z" fill="#fff" />
        <path d="M11 4c3 2 3 6 0 8M14 2c4 3 4 9 0 12" fill="none" stroke="#d7c8c2" strokeWidth="1.500" />
      </svg>
      <svg className="w-[9px] h-[9px] mr-[7px]" viewBox="0 0 18 18">
        <path d="M2 1v15" stroke="#fff" strokeWidth="2" />
        <path d="M3 2c4-1 6 2 11 1v7c-4 1-7-1-11 0z" fill="#fff" />
        <path d="M12 6l6 11H6z" fill="#f5cf1b" />
        <path d="M12 9v4M12 14v2" stroke="#333" strokeWidth="1.500" />
      </svg>
      <div className="w-[30px] mr-[8px] text-center leading-[9px] whitespace-nowrap">
        <div>3:12 PM</div>
        <div>2/23/2016</div>
      </div>
    </div>
  </div>
);

export default function App() {
  return (
    <div className="w-[1024px] h-[926px] overflow-hidden bg-white font-['Open_Sans','Noto_Sans',sans-serif] text-[6.400px] leading-[9px] tracking-[-0.120px]">
      <TitleBar />
      <TabBar />
      <Ribbon />
      <AddressBar />
      <div className="flex h-[448px] pt-[0.500px]">
        <Sidebar />
        <FileList />
        <div className="flex items-center justify-center w-[147px] pb-[2px] border-l border-[#f5f5f5] text-[#6b6b6b]">No preview available.</div>
      </div>
      <StatusBar />
      <Taskbar />
    </div>
  );
}
